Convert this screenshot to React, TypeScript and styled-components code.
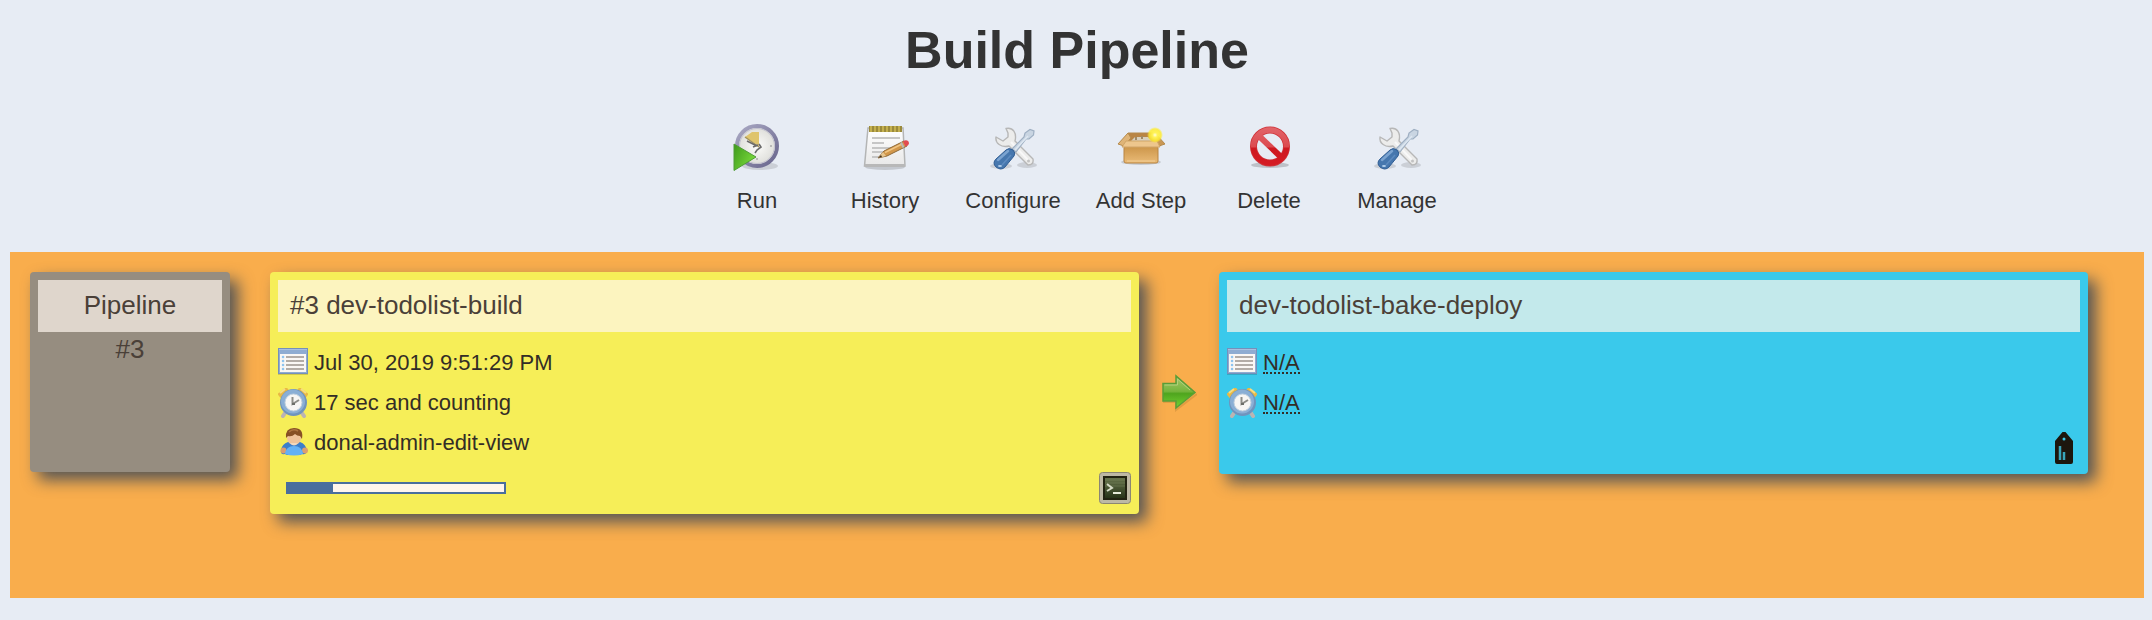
import React from "react";
import styled, { createGlobalStyle } from "styled-components";

const GlobalStyle = createGlobalStyle`
  * { box-sizing: border-box; }
  body {
    margin: 0;
    background: #e7ecf4;
    color: #333;
    font-family: "Liberation Sans", Arial, Helvetica, sans-serif;
    font-size: 22px;
    line-height: 26px;
  }
`;

const Page = styled.div`
  padding: 20px 8px 22px 10px;
`;

const Title = styled.h1`
  margin: 0;
  font-size: 52px;
  line-height: 60px;
  font-weight: 700;
  text-align: center;
`;

const Toolbar = styled.nav`
  display: flex;
  justify-content: center;
  padding: 43px 0 38px;
`;

const ToolLink = styled.a`
  display: flex;
  flex-direction: column;
  align-items: center;
  gap: 17px;
  width: 128px;
  color: #333;
  text-decoration: none;
  white-space: nowrap;
`;

const Board = styled.main`
  display: flex;
  align-items: flex-start;
  padding: 20px 56px 84px 20px;
  background: #f9ad4c;
`;

const Card = styled.section<{ $color: string; $minHeight: number }>`
  flex: 1;
  display: flex;
  flex-direction: column;
  min-width: 0;
  min-height: ${(p) => p.$minHeight}px;
  padding: 8px;
  border-radius: 4px;
  background: ${(p) => p.$color};
  box-shadow: 8px 8px 16px #555;
`;

const RevisionCard = styled(Card)`
  flex: none;
  width: 200px;
  margin-right: 40px;
  text-align: center;
`;

const CardTitle = styled.h2<{ $color: string }>`
  margin: 0;
  padding: 0 12px 2px;
  background: ${(p) => p.$color};
  color: #4a4038;
  font-size: 26px;
  font-weight: 400;
  line-height: 50px;
`;

const Revision = styled.p`
  margin: 0;
  color: #4a4038;
  font-size: 26px;
  line-height: 34px;
`;

const Details = styled.ul`
  list-style: none;
  margin: 0;
  padding: 16px 0 0;
  color: #332d26;
`;

const Detail = styled.li`
  display: flex;
  align-items: flex-start;
  gap: 6px;
  height: 40px;
  line-height: 30px;
`;

const Missing = styled.abbr`
  margin-top: 6px;
  border-bottom: 2px dotted #332d26;
  line-height: 18px;
  text-decoration: none;
`;

const CardFooter = styled.footer`
  display: flex;
  align-items: center;
  justify-content: space-between;
  margin-top: auto;
  padding: 4px 0 2px 8px;
`;

const ProgressTrack = styled.div`
  width: 220px;
  height: 12px;
  border: 2px solid #4a6e9d;
  background: #fff5ec;
`;

const ProgressFill = styled.div`
  height: 100%;
  background: #4a6e9d;
`;

const IconLink = styled.a`
  display: flex;
  justify-content: center;
  width: 32px;
  margin-left: auto;
`;

const Connector = styled.div`
  flex: none;
  display: flex;
  justify-content: center;
  width: 80px;
  padding-top: 102px;
`;

const Icon = styled.svg`
  display: block;
  flex: none;
`;

function RunIcon() {
  return (
    <Icon width="48" height="48" viewBox="0 0 48 48" aria-hidden="true">
      <defs>
        <linearGradient id="runRim" x1="0" y1="0" x2="1" y2="1">
          <stop offset="0" stopColor="#aaa9c4" />
          <stop offset="1" stopColor="#68658c" />
        </linearGradient>
        <radialGradient id="runFace">
          <stop offset="0" stopColor="#fcfcfa" />
          <stop offset="1" stopColor="#dcdcd8" />
        </radialGradient>
        <linearGradient id="runPlay" x1="0" y1="0" x2="1" y2="0.6">
          <stop offset="0" stopColor="#3e9a1c" />
          <stop offset="1" stopColor="#7bdb3c" />
        </linearGradient>
      </defs>
      <ellipse cx="27" cy="43" rx="18" ry="4" fill="#000" opacity="0.12" />
      <circle cx="24" cy="23" r="20" fill="url(#runFace)" stroke="url(#runRim)" strokeWidth="4" />
      <circle cx="24" cy="23" r="17.5" fill="none" stroke="#c3c2cf" strokeWidth="1" />
      <path d="M12 14L19 9L26 9L26 23Z" fill="#dfc46c" />
      <path d="M12 14L26 24" stroke="#a3935a" strokeWidth="1.5" />
      <path d="M14 18L24 23M26 21L28 24L24 27L22 30M25 22L20 24" stroke="#6b6b6b" strokeWidth="1.6" fill="none" />
      <circle cx="38" cy="23" r="1" fill="#aaa" />
      <circle cx="24" cy="36" r="1" fill="#aaa" />
      <path d="M1 21L23 34L1 47.500Z" fill="url(#runPlay)" stroke="#4f9c36" strokeWidth="1" />
    </Icon>
  );
}

function HistoryIcon() {
  return (
    <Icon width="48" height="48" viewBox="0 0 48 48" aria-hidden="true">
      <defs>
        <linearGradient id="notePaper" x1="0" y1="0" x2="0" y2="1">
          <stop offset="0" stopColor="#fff" />
          <stop offset="1" stopColor="#e8e8e8" />
        </linearGradient>
      </defs>
      <ellipse cx="24" cy="44" rx="20" ry="3" fill="#000" opacity="0.15" />
      <path d="M7 5H42L44 43H3.500Z" fill="url(#notePaper)" stroke="#b4b5b5" strokeWidth="1.500" />
      <path d="M3.500 41H44V44H3.500Z" fill="#b8b8b8" />
      <path d="M8 3H41V9H8Z" fill="#9b8a3b" />
      <path d="M9 6H41" stroke="#c4b04e" strokeWidth="6" strokeDasharray="2 2" />
      <path d="M11 15H39M11 20H23M11 25H32M11 29H25M11 34H19" stroke="#c6c6c6" strokeWidth="2" />
      <path d="M17 35L23 28L43 18L46 23L26 33Z" fill="#d2974a" stroke="#8f6a38" strokeWidth="1" />
      <path d="M24 29.500L41 21" stroke="#f0c584" strokeWidth="1.500" />
      <path d="M17 35L22 29L25 33Z" fill="#e6c690" />
      <path d="M17 35L20 32L21 34Z" fill="#443322" />
      <path d="M40 19.500L42.500 24.500" stroke="#b9b9b9" strokeWidth="2" />
      <path d="M42 18.500Q45 16 47.500 18.500Q49 22 44.500 23.500Z" fill="#e24b50" />
    </Icon>
  );
}

function ToolsIcon() {
  return (
    <Icon width="48" height="48" viewBox="0 0 48 48" aria-hidden="true">
      <ellipse cx="12" cy="43" rx="11" ry="3" fill="#000" opacity="0.12" />
      <ellipse cx="38" cy="42" rx="10" ry="3" fill="#000" opacity="0.12" />
      <path
        d="M17 5.500C24 4 28 10 26 18L44 36Q45 42 39 42L20 23C12 25 6 20 7 14L14 18L19 14L19 10Z"
        fill="#ececeb"
        stroke="#b7b7b7"
        strokeWidth="1.400"
        strokeLinejoin="round"
      />
      <path d="M22 19L39 37" stroke="#f8f8f8" strokeWidth="2" />
      <circle cx="39.500" cy="38" r="1.500" fill="#c2c2c2" />
      <path d="M23 26L35 14L36 10L41 6.500L45 8L44.500 12L40 16L37 16L27 29Z" fill="#c9d5e2" stroke="#9eafc2" strokeWidth="1.200" />
      <path d="M26 27L39 13" stroke="#dde7f1" strokeWidth="1.500" />
      <path d="M17 27Q20 24 24 27Q27 30 25 33L16 44Q12 48 7 44Q3 40 7 36Z" fill="#4677ae" stroke="#315e94" strokeWidth="1" />
      <path d="M9 37L19 28" stroke="#7ba3d0" strokeWidth="2.500" strokeLinecap="round" />
      <path d="M13 42L22 32" stroke="#5e8bbf" strokeWidth="1.500" />
      <ellipse cx="11" cy="43" rx="2" ry="1" fill="#b5d0ec" />
    </Icon>
  );
}

function BoxIcon() {
  return (
    <Icon width="48" height="48" viewBox="0 0 48 48" aria-hidden="true">
      <defs>
        <linearGradient id="boxFront" x1="0" y1="0" x2="0" y2="1">
          <stop offset="0" stopColor="#cb9448" />
          <stop offset="1" stopColor="#eabb77" />
        </linearGradient>
        <radialGradient id="boxGlow">
          <stop offset="0" stopColor="#fffde0" />
          <stop offset="0.300" stopColor="#fff35a" />
          <stop offset="0.750" stopColor="#ffec2e" stopOpacity="0.850" />
          <stop offset="1" stopColor="#ffec2e" stopOpacity="0" />
        </radialGradient>
      </defs>
      <ellipse cx="24" cy="39" rx="20" ry="3" fill="#000" opacity="0.140" />
      <path d="M11 10H38L43 20H6Z" fill="#b98545" stroke="#b58a4c" />
      <path d="M14 18L18 14H31L35 18Z" fill="#d8d0bd" />
      <path d="M19 14V17M25 13V16" stroke="#a08a66" strokeWidth="2" />
      <path d="M11 10L1 21L7 23L14 15Z" fill="#dfb477" stroke="#b58a4c" />
      <path d="M38 10L48 21L42 23L35 15Z" fill="#c99754" stroke="#b58a4c" />
      <rect x="7" y="23" width="34" height="17" rx="2" fill="url(#boxFront)" stroke="#b98543" />
      <path d="M9 18H40L43 24H5Z" fill="#edc68d" stroke="#d0a568" />
      <path d="M10 38H38" stroke="#f3cf98" />
      <circle cx="38" cy="12" r="8" fill="url(#boxGlow)" />
    </Icon>
  );
}

function DeleteIcon() {
  return (
    <Icon width="48" height="48" viewBox="0 0 48 48" aria-hidden="true">
      <defs>
        <linearGradient id="deleteRed" gradientUnits="userSpaceOnUse" x1="0" y1="3" x2="0" y2="44">
          <stop offset="0" stopColor="#e2666b" />
          <stop offset="0.500" stopColor="#dc4b50" />
          <stop offset="0.550" stopColor="#ce1820" />
          <stop offset="1" stopColor="#d61c24" />
        </linearGradient>
      </defs>
      <ellipse cx="25" cy="42" rx="19" ry="3" fill="#000" opacity="0.180" />
      <circle cx="25" cy="23.500" r="16.500" fill="none" stroke="#cf3339" strokeWidth="7" />
      <circle cx="25" cy="23.500" r="16.500" fill="none" stroke="url(#deleteRed)" strokeWidth="5.500" />
      <path d="M13 12L37 35" stroke="url(#deleteRed)" strokeWidth="6" />
    </Icon>
  );
}

function CalendarIcon() {
  return (
    <Icon width="30" height="28" viewBox="0 0 30 28" aria-hidden="true">
      <path d="M0 26.500H30" stroke="#000" opacity="0.150" />
      <rect x="0.500" y="0.500" width="29" height="25" fill="#8facd2" stroke="#7590bb" />
      <path d="M1 1.500H29" stroke="#a9c0df" />
      <rect x="2" y="6" width="26" height="18" fill="#faf7f5" />
      <path d="M5 9H5.100M5 13H5.100M5 17H5.100M5 21H5.100" stroke="#8fc4ef" strokeWidth="2.500" strokeLinecap="round" />
      <path d="M8 9H26M8 13H26M8 17H26M8 21H26" stroke="#b3aca7" strokeWidth="2" />
    </Icon>
  );
}

function ClockIcon() {
  return (
    <Icon width="30" height="30" viewBox="0 0 30 30" aria-hidden="true">
      <path d="M7 25L5 28M24 25L26 28" stroke="#bcb4b2" strokeWidth="4" strokeLinecap="round" />
      <path d="M1 8L10 1M29 8L20 1" stroke="#e9b944" strokeWidth="5" />
      <path d="M2 5L7 1M28 5L23 1" stroke="#f6dc83" strokeWidth="2" />
      <circle cx="15.500" cy="14.500" r="13.500" fill="#7094bd" />
      <circle cx="15" cy="13.500" r="12" fill="#8aafd5" />
      <circle cx="15.500" cy="14.500" r="8.500" fill="#f7f6f4" stroke="#c2d1df" />
      <path d="M14.500 9V16L21 12" fill="none" stroke="#8d8d88" strokeWidth="2" />
      <path d="M14 16H17" stroke="#6d6e69" strokeWidth="2" />
    </Icon>
  );
}

function UserIcon() {
  return (
    <Icon width="30" height="28" viewBox="0 0 30 28" aria-hidden="true">
      <path d="M3 22Q4 16 10 14H22Q28 16 29 23Q28 27 24 26L22 27H9L7 26Q2 27 3 22Z" fill="#3c7ecb" />
      <circle cx="5.500" cy="22.500" r="3" fill="#dc9e70" />
      <circle cx="27" cy="22.500" r="3" fill="#dc9e70" />
      <path d="M7 26Q8 18 16 18Q24 18 25 26Q16 29 7 26Z" fill="#64b1f6" />
      <ellipse cx="16" cy="10" rx="7" ry="7" fill="#efc29b" />
      <path d="M12 15Q16 20 20 15Z" fill="#f4d8bd" />
      <path d="M8 10Q7 0 16 0Q26 0 24 11L22 8Q19 8 17 6Q14 9 10 8Z" fill="#875025" />
      <path d="M11 4Q15 0 20 3" stroke="#ad7440" strokeWidth="1.500" fill="none" />
    </Icon>
  );
}

function ConsoleIcon() {
  return (
    <Icon width="32" height="32" viewBox="0 0 32 32" aria-hidden="true">
      <defs>
        <linearGradient id="consoleScreen" x1="0" y1="0" x2="0" y2="1">
          <stop offset="0" stopColor="#65724a" />
          <stop offset="0.500" stopColor="#465332" />
          <stop offset="1" stopColor="#273318" />
        </linearGradient>
      </defs>
      <rect x="0.500" y="0.500" width="31" height="31" rx="3" fill="#bdb8a4" stroke="#8b8672" />
      <rect x="4" y="4" width="24" height="24" fill="#222312" />
      <rect x="6" y="6" width="20" height="20" fill="url(#consoleScreen)" />
      <path d="M6 8H26M6 11H26M6 14H26" stroke="#839069" opacity="0.400" />
      <path d="M8 12L13 16L8 19" fill="none" stroke="#d5dac6" strokeWidth="2" />
      <path d="M14 21H22" stroke="#e6ead9" strokeWidth="2" />
    </Icon>
  );
}

function ArrowIcon() {
  return (
    <Icon width="36" height="38" viewBox="0 0 36 38" aria-hidden="true">
      <defs>
        <linearGradient id="arrowGreen" x1="0" y1="0" x2="0" y2="1">
          <stop offset="0" stopColor="#a8c66c" />
          <stop offset="0.480" stopColor="#75b53d" />
          <stop offset="0.550" stopColor="#4fa51e" />
          <stop offset="1" stopColor="#73d334" />
        </linearGradient>
      </defs>
      <path d="M2 28H15V36L36 20" fill="none" stroke="#805a20" strokeWidth="2" opacity="0.200" />
      <path d="M2 9.500H15V2L34 18.500L15 34V27H2Z" fill="url(#arrowGreen)" stroke="#5a9d38" strokeWidth="1.500" />
      <path d="M3.500 11H16.500V5L29 16" fill="none" stroke="#b3d07c" />
    </Icon>
  );
}

function TagIcon() {
  return (
    <Icon width="18" height="32" viewBox="0 0 18 32" aria-hidden="true">
      <path
        fillRule="evenodd"
        fill="#1c160d"
        d="M7.500 0H10.500L18 9V30Q18 32 16 32H2Q0 32 0 30V9ZM9 5.500A1.500 1.500 0 1 0 9 8.500A1.500 1.500 0 1 0 9 5.500Z"
      />
      <path d="M5 14V28M9 20V28" stroke="#38a5ba" strokeWidth="2.500" />
    </Icon>
  );
}

const tools = [
  { label: "Run", icon: RunIcon },
  { label: "History", icon: HistoryIcon },
  { label: "Configure", icon: ToolsIcon },
  { label: "Add Step", icon: BoxIcon },
  { label: "Delete", icon: DeleteIcon },
  { label: "Manage", icon: ToolsIcon },
];

const buildProgress = 21;

export default function App() {
  return (
    <>
      <GlobalStyle />
      <Page>
        <Title>Build Pipeline</Title>
        <Toolbar>
          {tools.map(({ label, icon: ToolIcon }) => (
            <ToolLink key={label} href="#">
              <ToolIcon />
              {label}
            </ToolLink>
          ))}
        </Toolbar>
        <Board>
          <RevisionCard $color="#968d80" $minHeight={200}>
            <CardTitle $color="#dfd6cc">Pipeline</CardTitle>
            <Revision>#3</Revision>
          </RevisionCard>
          <Card $color="#f6ee58" $minHeight={242}>
            <CardTitle $color="#fcf4bf">#3 dev-todolist-build</CardTitle>
            <Details>
              <Detail>
                <CalendarIcon />
                Jul 30, 2019 9:51:29 PM
              </Detail>
              <Detail>
                <ClockIcon />
                17 sec and counting
              </Detail>
              <Detail>
                <UserIcon />
                donal-admin-edit-view
              </Detail>
            </Details>
            <CardFooter>
              <ProgressTrack
                role="progressbar"
                aria-label="Build progress"
                aria-valuenow={buildProgress}
                aria-valuemin={0}
                aria-valuemax={100}
              >
                <ProgressFill style={{ width: `${buildProgress}%` }} />
              </ProgressTrack>
              <IconLink href="#" aria-label="Console">
                <ConsoleIcon />
              </IconLink>
            </CardFooter>
          </Card>
          <Connector>
            <ArrowIcon />
          </Connector>
          <Card $color="#3ac9eb" $minHeight={202}>
            <CardTitle $color="#c3e9eb">dev-todolist-bake-deploy</CardTitle>
            <Details>
              <Detail>
                <CalendarIcon />
                <Missing>N/A</Missing>
              </Detail>
              <Detail>
                <ClockIcon />
                <Missing>N/A</Missing>
              </Detail>
            </Details>
            <CardFooter>
              <IconLink href="#" aria-label="Trigger">
                <TagIcon />
              </IconLink>
            </CardFooter>
          </Card>
        </Board>
      </Page>
    </>
  );
}
